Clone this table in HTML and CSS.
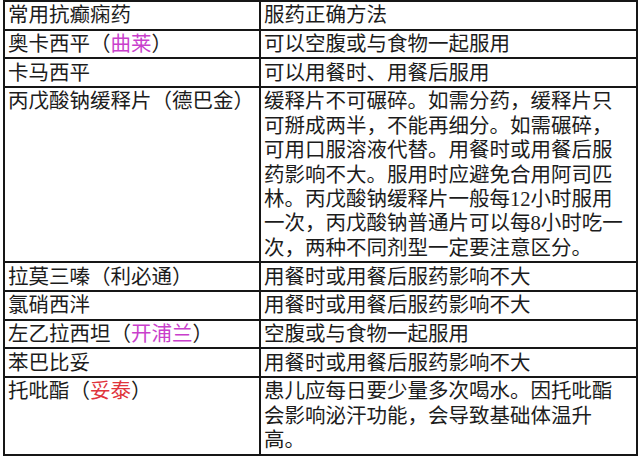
FILE: index.html
```html
<!DOCTYPE html>
<html lang="zh-CN">
<head>
<meta charset="utf-8">
<title>常用抗癫痫药</title>
<link rel="stylesheet" href="styles.css">
</head>
<body>
<table class="drug-table">
  <colgroup>
    <col class="col-name">
    <col class="col-method">
  </colgroup>
  <tr><td>常用抗癫痫药</td><td>服药正确方法</td></tr>
  <tr><td>奥卡西平（<span class="magenta">曲莱</span>）</td><td>可以空腹或与食物一起服用</td></tr>
  <tr><td>卡马西平</td><td>可以用餐时、用餐后服用</td></tr>
  <tr><td>丙戊酸钠缓释片（德巴金）</td><td>缓释片不可碾碎。如需分药，缓释片只可掰成两半，不能再细分。如需碾碎，可用口服溶液代替。用餐时或用餐后服药影响不大。服用时应避免合用阿司匹林。丙戊酸钠缓释片一般每12小时服用一次，丙戊酸钠普通片可以每8小时吃一次，两种不同剂型一定要注意区分。</td></tr>
  <tr><td>拉莫三嗪（利必通）</td><td>用餐时或用餐后服药影响不大</td></tr>
  <tr><td>氯硝西泮</td><td>用餐时或用餐后服药影响不大</td></tr>
  <tr><td>左乙拉西坦（<span class="magenta">开浦兰</span>）</td><td>空腹或与食物一起服用</td></tr>
  <tr><td>苯巴比妥</td><td>用餐时或用餐后服药影响不大</td></tr>
  <tr><td>托吡酯（<span class="red">妥泰</span>）</td><td>患儿应每日要少量多次喝水。因托吡酯会影响泌汗功能，会导致基础体温升高。</td></tr>
</table>
</body>
</html>
```

FILE: styles.css
```css
html, body {
  margin: 0;
  padding: 0;
  background: #ffffff;
}

body {
  padding: 0 0 0 3px;
}

.drug-table {
  border-collapse: collapse;
  table-layout: fixed;
  width: 633px;
  font-family: "Liberation Serif", "Noto Sans CJK SC", sans-serif;
  font-size: 20.5px;
  line-height: 24.4px;
  color: #1c1c1c;
}

.col-name {
  width: 256px;
}

.col-method {
  width: 377px;
}

.drug-table td {
  border: 2px solid #161616;
  padding: 1.3px 9px 1px 3px;
  vertical-align: top;
  word-break: break-all;
}

.magenta {
  color: #c93fcc;
}

.red {
  color: #e0343c;
}
```
